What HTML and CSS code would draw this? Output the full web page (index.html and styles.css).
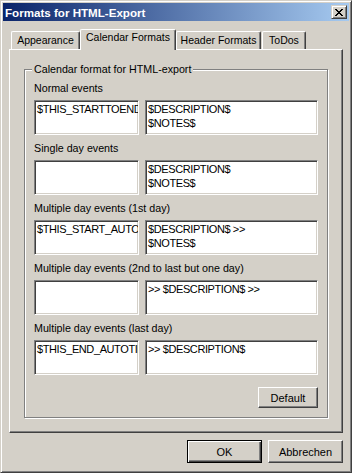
FILE: index.html
```html
<!DOCTYPE html>
<html lang="en">
<head>
    <meta charset="UTF-8">
    <title>Formats for HTML-Export</title>
    <link rel="stylesheet" href="styles.css">
</head>
<body>
    <div class="window">
        <div class="titlebar">
            <span class="title">Formats for HTML-Export</span>
            <span class="close">
                <svg width="8" height="7" viewBox="0 0 8 7">
                    <path d="M0 0h2v1h1v1h2V1h1V0h2v1H7v1H6v1H5v1h1v1h1v1h1v1H6V6H5V5H3v1H2v1H0V6h1V5h1V4h1V3H2V2H1V1H0z" fill="#000"/>
                </svg>
            </span>
        </div>

        <div class="content">
            <div class="tabs">
                <div class="tab tab-appearance">Appearance</div>
                <div class="tab tab-calendar active">Calendar Formats</div>
                <div class="tab tab-header">Header Formats</div>
                <div class="tab tab-todos">ToDos</div>
            </div>

            <div class="panel">
                <fieldset class="group">
                    <legend>Calendar format for HTML-export</legend>

                    <div class="field first">
                        <div class="field-label">Normal events</div>
                        <div class="pair">
                            <div class="edit short">$THIS_STARTTOEND$</div>
                            <div class="edit long">$DESCRIPTION$<br>$NOTES$</div>
                        </div>
                    </div>

                    <div class="field">
                        <div class="field-label">Single day events</div>
                        <div class="pair">
                            <div class="edit short"></div>
                            <div class="edit long">$DESCRIPTION$<br>$NOTES$</div>
                        </div>
                    </div>

                    <div class="field">
                        <div class="field-label">Multiple day events (1st day)</div>
                        <div class="pair">
                            <div class="edit short">$THIS_START_AUTO$</div>
                            <div class="edit long">$DESCRIPTION$ &gt;&gt;<br>$NOTES$</div>
                        </div>
                    </div>

                    <div class="field">
                        <div class="field-label">Multiple day events (2nd to last but one day)</div>
                        <div class="pair">
                            <div class="edit short"></div>
                            <div class="edit long">&gt;&gt; $DESCRIPTION$ &gt;&gt;</div>
                        </div>
                    </div>

                    <div class="field">
                        <div class="field-label">Multiple day events (last day)</div>
                        <div class="pair">
                            <div class="edit short">$THIS_END_AUTOTIME$</div>
                            <div class="edit long">&gt;&gt; $DESCRIPTION$</div>
                        </div>
                    </div>

                    <div class="group-actions">
                        <button class="btn small">Default</button>
                    </div>
                </fieldset>
            </div>

            <div class="dialog-buttons">
                <button class="btn default">OK</button>
                <button class="btn">Abbrechen</button>
            </div>
        </div>
    </div>
</body>
</html>
```

FILE: styles.css
```css
body {
    margin: 0;
    width: 352px;
    height: 473px;
    overflow: hidden;
    background-color: #d4d0c8;
    font-family: "Liberation Sans", Arial, sans-serif;
    font-size: 10.7px;
    color: #000;
}

.window {
    box-sizing: border-box;
    width: 352px;
    height: 473px;
    padding: 2px;
    border: 1px solid;
    border-color: #d4d0c8 #404040 #404040 #d4d0c8;
    box-shadow: inset 1px 1px #fff, inset -1px -1px #808080;
    display: flex;
    flex-direction: column;
}

.titlebar {
    height: 18px;
    flex-shrink: 0;
    display: flex;
    align-items: center;
    justify-content: space-between;
    padding: 0 2px;
    background: linear-gradient(to right, #0a246a, #a6caf0);
}

.title {
    color: #fff;
    font-weight: bold;
    font-size: 11.6px;
    line-height: 13px;
}

.close {
    box-sizing: border-box;
    width: 16px;
    height: 14px;
    display: flex;
    justify-content: center;
    align-items: center;
    background-color: #d4d0c8;
    border: 1px solid;
    border-color: #d4d0c8 #404040 #404040 #d4d0c8;
    box-shadow: inset 1px 1px #fff, inset -1px -1px #808080;
}

.close svg {
    display: block;
    margin-left: -1px;
}

.content {
    flex: 1;
    padding: 8px 6px 0 6px;
}

/* tab strip */
.tabs {
    display: flex;
    align-items: flex-end;
    height: 20px;
    padding-left: 2px;
}

.tab {
    box-sizing: border-box;
    height: 18px;
    padding-top: 2px;
    line-height: 13px;
    font-size: 10.5px;
    text-align: center;
    white-space: nowrap;
    background-color: #d4d0c8;
    border-top: 1px solid #fff;
    border-left: 1px solid #fff;
    border-right: 1px solid #404040;
    border-radius: 2px 2px 0 0;
    box-shadow: inset -1px 0 #808080;
}

.tab-appearance {
    width: 69px;
}

.tab-calendar {
    width: 96px;
}

.tab-header {
    width: 85px;
}

.tab-todos {
    width: 44px;
    margin-left: 1px;
}

.tab.active {
    position: relative;
    z-index: 1;
    height: 21px;
    margin-bottom: -1px;
    padding-top: 1px;
}

.panel {
    box-sizing: border-box;
    height: 384px;
    padding: 13px 0 0 14px;
    border: 1px solid;
    border-color: #fff #404040 #404040 #fff;
    box-shadow: inset -1px -1px #808080;
}

/* group box */
.group {
    box-sizing: border-box;
    width: 304px;
    margin: 0;
    padding: 0 9px 9px 9px;
    border: 1px solid #808080;
    box-shadow: inset 1px 1px #fff, 1px 1px #fff;
}

.group legend {
    margin-left: -2px;
    padding: 0 2px;
    line-height: 13px;
    background-color: #d4d0c8;
}

.field {
    margin-top: 7px;
}

.field.first {
    margin-top: 6px;
}

.field-label {
    line-height: 13px;
    margin-bottom: 5px;
    white-space: nowrap;
}

.pair {
    display: flex;
    gap: 6px;
}

.edit {
    box-sizing: border-box;
    height: 35px;
    padding: 1px 2px;
    background-color: #fff;
    border: 1px solid;
    border-color: #808080 #fff #fff #808080;
    box-shadow: inset 1px 1px #404040, inset -1px -1px #d4d0c8;
    overflow: hidden;
    white-space: nowrap;
    font-size: 11px;
    line-height: 14px;
    letter-spacing: -0.4px;
}

.edit.short {
    width: 105px;
}

.edit.long {
    width: 173px;
}

.group-actions {
    display: flex;
    justify-content: flex-end;
    margin-top: 12px;
}

/* buttons */
.btn {
    box-sizing: border-box;
    width: 75px;
    height: 23px;
    padding: 0;
    font-family: "Liberation Sans", Arial, sans-serif;
    font-size: 11px;
    color: #000;
    background-color: #d4d0c8;
    border: 1px solid;
    border-color: #fff #404040 #404040 #fff;
    box-shadow: inset -1px -1px #808080;
}

.btn.small {
    width: 60px;
    height: 21px;
}

.btn.default {
    border: 1px solid #000;
    box-shadow: inset 1px 1px #fff, inset -1px -1px #404040, inset -2px -2px #808080;
}

.dialog-buttons {
    display: flex;
    justify-content: flex-end;
    gap: 6px;
    margin-top: 7px;
}
```
